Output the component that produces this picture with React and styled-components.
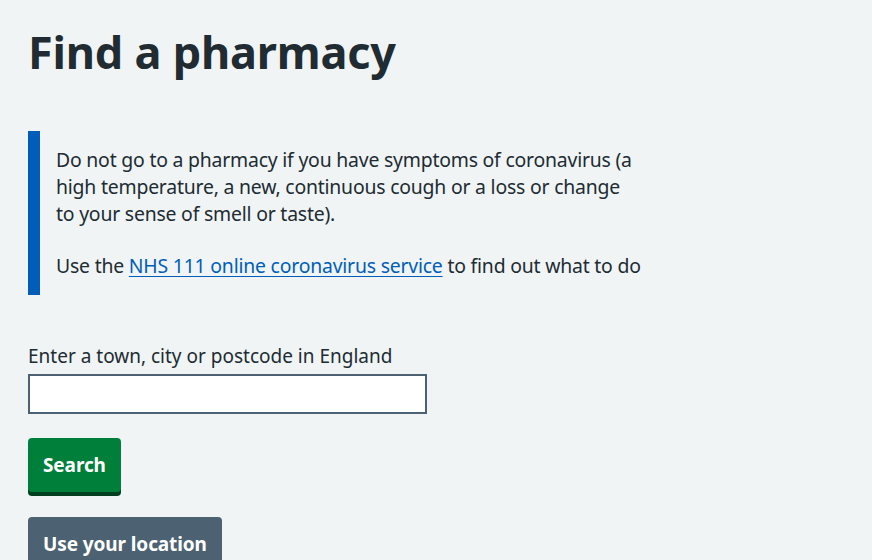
import React from "react";
import styled, { createGlobalStyle } from "styled-components";

const GlobalStyle = createGlobalStyle`
  html, body {
    margin: 0;
    padding: 0;
    background: #f0f4f5;
  }
  body {
    font-family: "Noto Sans", "Open Sans", sans-serif;
    color: #212b32;
    -webkit-font-smoothing: antialiased;
  }
`;

const Page = styled.main`
  padding: 16px 28px 0 28px;
  width: 872px;
  height: 560px;
  box-sizing: border-box;
  overflow: hidden;
`;

const Title = styled.h1`
  margin: 0 0 43px 0;
  font-size: 45px;
  line-height: 72px;
  font-weight: 700;
  letter-spacing: -0.2px;
`;

const Inset = styled.div`
  border-left: 12px solid #005eb8;
  padding: 15px 0 16px 16px;
  width: 640px;
  box-sizing: border-box;
  margin-bottom: 48px;
`;

const Para = styled.p`
  margin: 0 0 ${(p) => p.gap || 0}px 0;
  font-size: 19.4px;
  line-height: 27px;
  letter-spacing: -0.2px;
`;

const Link = styled.a`
  color: #005eb8;
  text-decoration: underline;
  text-underline-offset: 3px;
  text-decoration-thickness: 1px;
`;

const Label = styled.label`
  display: block;
  font-size: 19px;
  line-height: 26px;
  margin-bottom: 5px;
`;

const Input = styled.input`
  display: block;
  width: 399px;
  height: 40px;
  box-sizing: border-box;
  border: 2px solid #4c6272;
  background: #ffffff;
  margin: 0 0 24px 0;
  padding: 0 8px;
  font-size: 19px;
  font-family: inherit;
  border-radius: 0;
  outline: none;
`;

const Buttons = styled.div`
  display: flex;
  flex-direction: column;
  align-items: flex-start;
  gap: 25px;
`;

const Button = styled.button`
  background: ${(p) => p.bg};
  box-shadow: 0 4px 0 ${(p) => p.shadow};
  color: #ffffff;
  border: none;
  border-radius: 4px;
  font-family: inherit;
  font-weight: 700;
  font-size: 19px;
  line-height: 24px;
  padding: 0 15px;
  height: 54px;
  cursor: pointer;
  letter-spacing: -0.1px;
`;

export default function App() {
  return (
    <>
      <GlobalStyle />
      <Page>
        <Title>Find a pharmacy</Title>
        <Inset>
          <Para gap={25}>
            Do not go to a pharmacy if you have symptoms of coronavirus (a
            <br />
            high temperature, a new, continuous cough or a loss or change
            <br />
            to your sense of smell or taste).
          </Para>
          <Para>
            Use the <Link href="#">NHS 111 online coronavirus service</Link> to
            find out what to do
          </Para>
        </Inset>
        <Label htmlFor="location">Enter a town, city or postcode in England</Label>
        <Input id="location" type="text" />
        <Buttons>
          <Button bg="#007f3b" shadow="#00401e">Search</Button>
          <Button bg="#4c6272" shadow="#263139">Use your location</Button>
        </Buttons>
      </Page>
    </>
  );
}
